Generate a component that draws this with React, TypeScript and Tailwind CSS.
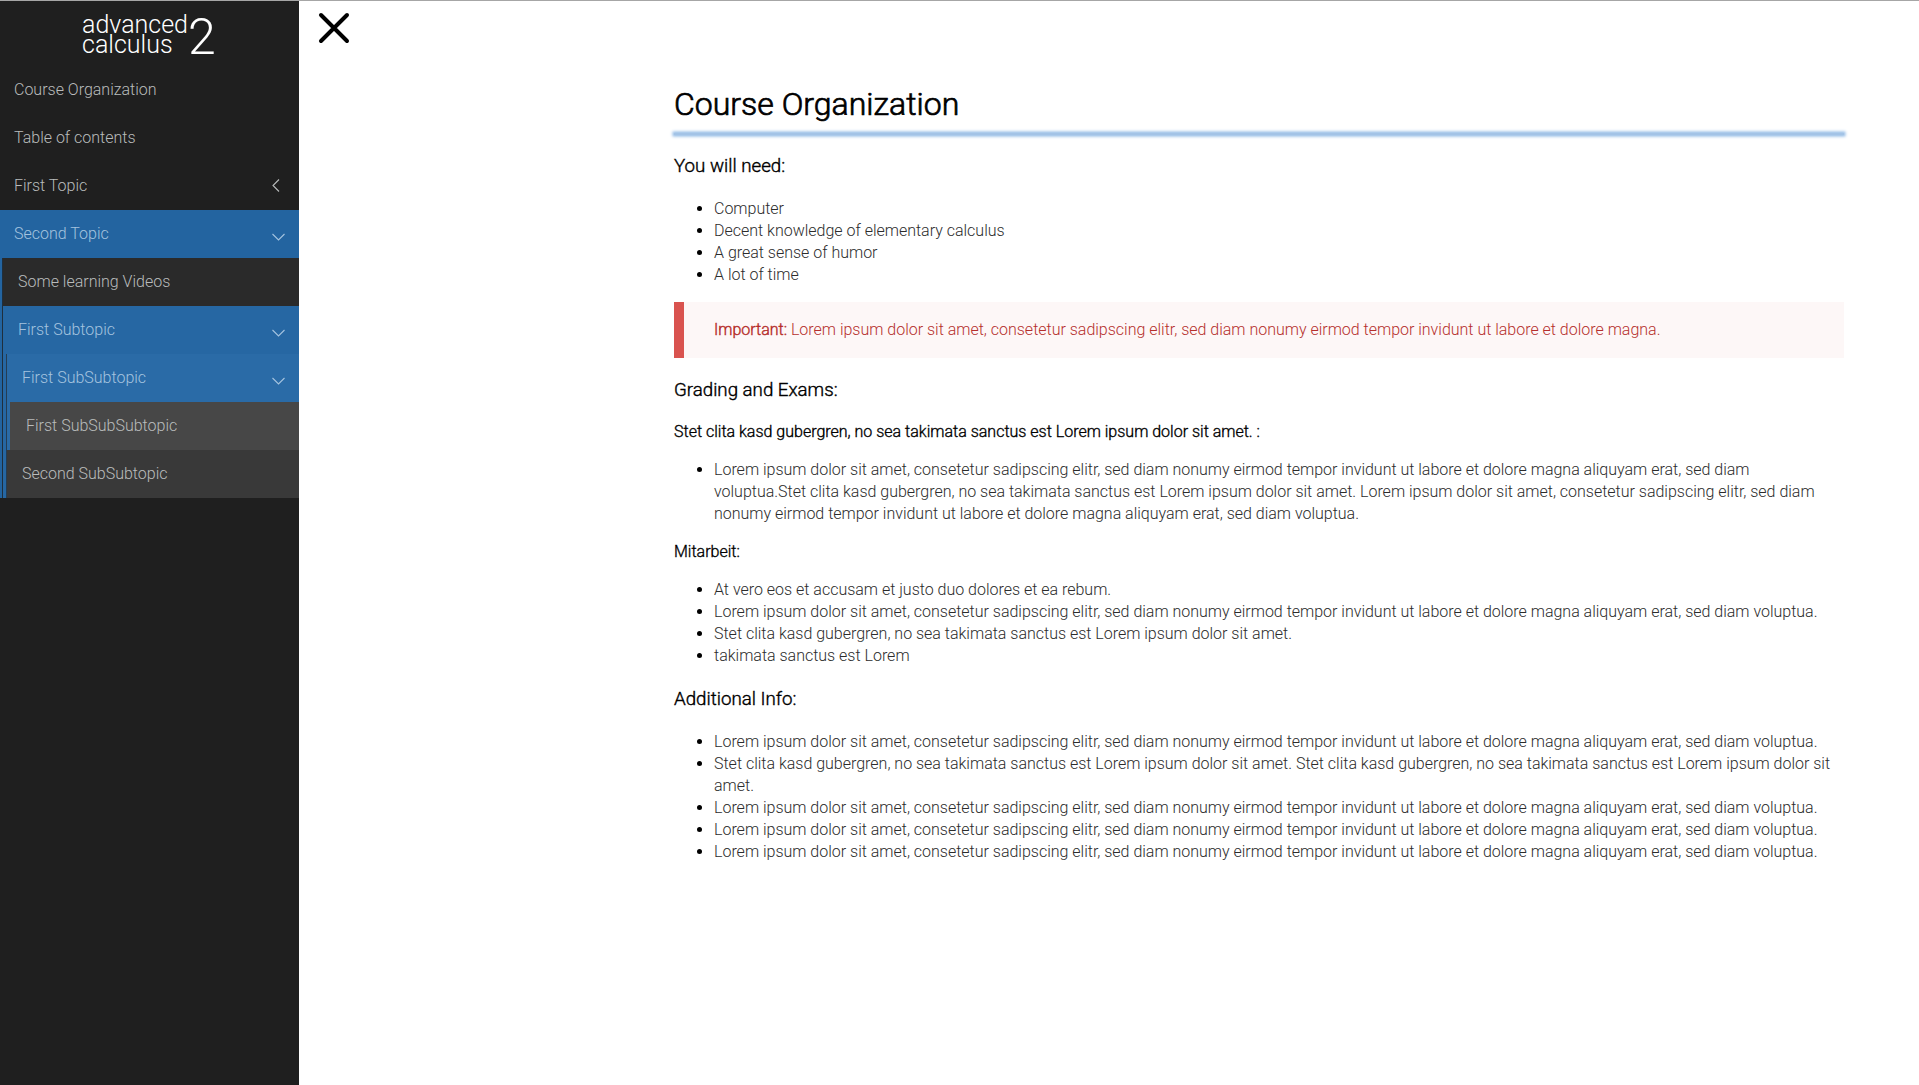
const lorem = "Lorem ipsum dolor sit amet, consetetur sadipscing elitr, sed diam nonumy eirmod tempor invidunt ut labore et dolore magna aliquyam erat, sed diam voluptua.";
const stet = "Stet clita kasd gubergren, no sea takimata sanctus est Lorem ipsum dolor sit amet.";

function Chevron({ open = false }: { open?: boolean }) {
  return open ? (
    <svg className="mt-[5px] mr-[14px] h-2 w-[13px]" viewBox="0 0 13 8" fill="none" stroke="currentColor" strokeWidth="1.1"><path d="M.5 1l6 6 6-6" /></svg>
  ) : (
    <svg className="-mt-px mr-[19px] h-[13px] w-2" viewBox="0 0 8 13" fill="none" stroke="currentColor" strokeWidth="1.1"><path d="M7 .5l-6 6 6 6" /></svg>
  );
}

function Item({ label, className = "pl-[14px]", open }: { label: string; className?: string; open?: boolean }) {
  return (
    <div className={`flex h-12 items-center justify-between ${className}`}>
      <span>{label}</span>
      {open !== undefined && <Chevron open={open} />}
    </div>
  );
}

function List({ items, className = "" }: { items: string[]; className?: string }) {
  return (
    <ul className={`list-disc pl-10 tracking-[-0.008px] text-[#2c2c2c] marker:text-black ${className}`}>
      {items.map((t, i) => <li key={i}>{t}</li>)}
    </ul>
  );
}

function SectionTitle({ children, className = "mt-[18px]" }: { children: string; className?: string }) {
  return <h2 className={`text-[18.72px] leading-[26px] text-black [-webkit-text-stroke:0.4px_black] ${className}`}>{children}</h2>;
}

function SubTitle({ children, className }: { children: string; className: string }) {
  return <h3 className={`text-black [-webkit-text-stroke:0.35px_black] ${className}`}>{children}</h3>;
}

export default function App() {
  return (
    <div className="flex h-[1085px] w-[1919px] overflow-hidden border-t border-[#a6a6a6] bg-white font-['Roboto',sans-serif] text-base font-light">
      <aside className="w-[299px] shrink-0 bg-[#1f1f1f] text-[#b9bcbc]">
        <div className="flex h-[65px] pl-[82px] text-white">
          <div className="w-[106px] pt-[14px] text-[25px] leading-[20px]"><div>advanced</div><div>calculus</div></div>
          <div className="pt-[6px] text-[50px] leading-[60px]">2</div>
        </div>
        <Item label="Course Organization" />
        <Item label="Table of contents" />
        <Item label="First Topic" open={false} />
        <Item label="Second Topic" open className="bg-[#2364a0] pl-[14px] text-[#a4c3df]" />
        <div className="border-l-2 border-[#2364a0] bg-[#1f2f3d] pl-px">
          <Item label="Some learning Videos" className="bg-[#2a2a2a] pl-[15px]" />
          <Item label="First Subtopic" open className="bg-[#2667a3] pl-[15px] text-[#a4c3df]" />
          <div className="border-l-[3px] border-[#2667a3] bg-[#243d54] pl-px">
            <Item label="First SubSubtopic" open className="bg-[#2a6ba7] pl-[15px] text-[#a4c3df]" />
            <div className="border-l-[3px] border-[#2a6ba7]"><Item label="First SubSubSubtopic" className="bg-[#474747] pl-4" /></div>
            <Item label="Second SubSubtopic" className="bg-[#393939] pl-[15px]" />
          </div>
        </div>
      </aside>
      <main className="relative flex-1 pl-[375px]">
        <svg className="absolute top-[11px] left-[19px] h-8 w-8" viewBox="0 0 32 32" stroke="black" strokeWidth="4" strokeLinecap="round"><path d="M3 3l26 26M29 3L3 29" /></svg>
        <div className="w-[1170px] pt-[79px] leading-[22px]">
          <h1 className="h-[53px] text-[32px] leading-[48px] text-black [-webkit-text-stroke:0.7px_black]">Course Organization</h1>
          <div className="h-0.5 bg-[#a3c3e6] shadow-[0_0_3px_1.5px_#93bce6]" />
          <SectionTitle>You will need:</SectionTitle>
          <List className="mt-[19px]" items={["Computer", "Decent knowledge of elementary calculus", "A great sense of humor", "A lot of time"]} />
          <div className="mt-4 flex h-14 items-center border-l-[10px] border-[#d9534f] bg-[#fdf7f7] pl-[30px] text-[#b52f2c]"><p className="tracking-[-0.008px]"><b className="font-light [-webkit-text-stroke:0.4px_#b52b27]">Important:</b> Lorem ipsum dolor sit amet, consetetur sadipscing elitr, sed diam nonumy eirmod tempor invidunt ut labore et dolore magna.</p></div>
          <SectionTitle className="mt-[19px]">Grading and Exams:</SectionTitle>
          <SubTitle className="mt-[18px]">{stet + " :"}</SubTitle>
          <List className="mt-4" items={[lorem + stet + " " + lorem]} />
          <SubTitle className="mt-4">Mitarbeit:</SubTitle>
          <List className="mt-4" items={["At vero eos et accusam et justo duo dolores et ea rebum.", lorem, stet, "takimata sanctus est Lorem"]} />
          <SectionTitle className="mt-[19px]">Additional Info:</SectionTitle>
          <List className="mt-[19px]" items={[lorem, stet + " " + stet, lorem, lorem, lorem]} />
        </div>
      </main>
    </div>
  );
}
